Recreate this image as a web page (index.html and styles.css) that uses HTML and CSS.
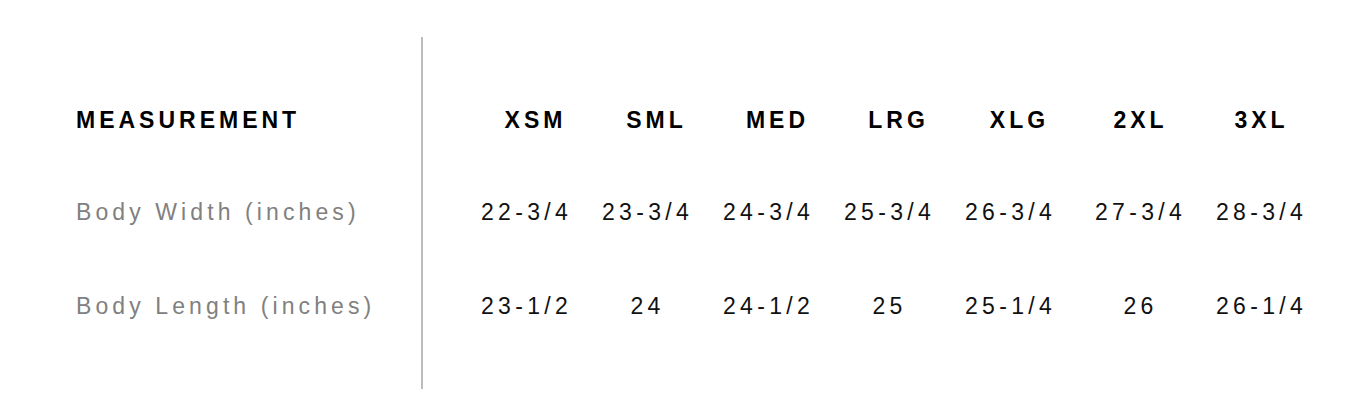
FILE: index.html
```html
<!DOCTYPE html>
<html lang="en">
<head>
<meta charset="utf-8">
<title>Size Chart</title>
<link rel="stylesheet" href="styles.css">
</head>
<body>
<div class="chart">
  <div class="labels">
    <div class="row head">MEASUREMENT</div>
    <div class="row label">Body Width (inches)</div>
    <div class="row row-last label">Body Length (inches)</div>
  </div>
  <div class="divider"></div>
  <div class="sizes">
    <div class="cell head">XSM</div>
    <div class="cell head">SML</div>
    <div class="cell head">MED</div>
    <div class="cell head">LRG</div>
    <div class="cell head">XLG</div>
    <div class="cell head">2XL</div>
    <div class="cell head">3XL</div>

    <div class="cell val shift">22-3/4</div>
    <div class="cell val shift">23-3/4</div>
    <div class="cell val shift">24-3/4</div>
    <div class="cell val shift">25-3/4</div>
    <div class="cell val shift">26-3/4</div>
    <div class="cell val">27-3/4</div>
    <div class="cell val">28-3/4</div>

    <div class="cell val shift">23-1/2</div>
    <div class="cell val shift">24</div>
    <div class="cell val shift">24-1/2</div>
    <div class="cell val shift">25</div>
    <div class="cell val shift">25-1/4</div>
    <div class="cell val">26</div>
    <div class="cell val">26-1/4</div>
  </div>
</div>
</body>
</html>
```

FILE: styles.css
```css
html, body {
  margin: 0;
  padding: 0;
  background: #ffffff;
}

body {
  font-family: "Liberation Sans", Arial, Helvetica, sans-serif;
  font-size: 23px;
  color: #111111;
}

.chart {
  display: flex;
  align-items: stretch;
  padding: 37px 0 0 76px;
  height: 352px;
}

.labels {
  width: 345px;
  display: grid;
  grid-template-rows: 92px 92px 96px;
  align-content: start;
  padding-top: 37px;
}

.row {
  display: flex;
  align-items: center;
  white-space: nowrap;
}

.head {
  font-weight: 700;
  color: #000000;
  letter-spacing: 4px;
}

.label {
  color: #808080;
  letter-spacing: 4.1px;
}

.divider {
  width: 2px;
  background: #bcbcbc;
}

.sizes {
  display: grid;
  grid-template-columns: repeat(7, 121px);
  grid-template-rows: 92px 92px 96px;
  align-content: start;
  padding-top: 37px;
  margin-left: 52px;
}

.cell {
  display: flex;
  align-items: center;
  justify-content: center;
  white-space: nowrap;
}

.val {
  color: #111111;
  letter-spacing: 4.3px;
}

.shift {
  padding-right: 18px;
}
```
